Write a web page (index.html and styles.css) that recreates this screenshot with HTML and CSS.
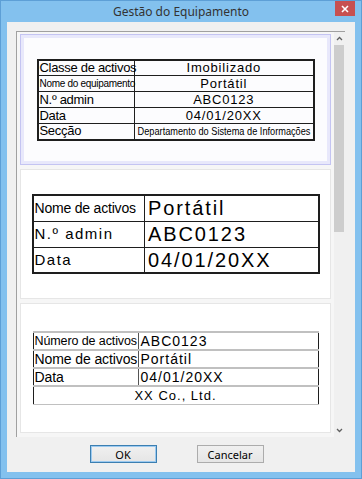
FILE: index.html
```html
<!DOCTYPE html>
<html lang="pt">
  <head>
    <meta charset="UTF-8" />
    <title>Gestão do Equipamento</title>
    <link rel="stylesheet" href="styles.css">
  </head>
  <body>
    <div class="window">
      <div class="titlebar">
        <span></span>
        <span class="title">Gestão do Equipamento</span>
        <span class="close">
          <svg width="8" height="8" viewBox="0 0 8 8"><path d="M1 1 L7 7 M7 1 L1 7" stroke="#fff" stroke-width="1.6" /></svg>
        </span>
      </div>
      <div class="client">
        <div class="panel">
          <div class="sheets">
            <div class="sheet sheet-selected">
              <div class="sheet-inner">
                <table class="label label-a">
                  <tr><td class="key">Classe de activos</td><td class="val">Imobilizado</td></tr>
                  <tr><td class="key key-small">Nome do equipamento</td><td class="val">Portátil</td></tr>
                  <tr><td class="key">N.º admin</td><td class="val">ABC0123</td></tr>
                  <tr><td class="key">Data</td><td class="val">04/01/20XX</td></tr>
                  <tr><td class="key">Secção</td><td class="val"><span class="narrow">Departamento do Sistema de Informações</span></td></tr>
                </table>
              </div>
            </div>
            <div class="sheet">
              <div class="sheet-inner">
                <table class="label label-b">
                  <tr><td class="key key-small">Nome de activos</td><td class="val">Portátil</td></tr>
                  <tr><td class="key">N.º admin</td><td class="val">ABC0123</td></tr>
                  <tr><td class="key">Data</td><td class="val">04/01/20XX</td></tr>
                </table>
              </div>
            </div>
            <div class="sheet">
              <div class="sheet-inner">
                <table class="label label-c">
                  <tr><td class="key key-small">Número de activos</td><td class="val">ABC0123</td></tr>
                  <tr><td class="key">Nome de activos</td><td class="val">Portátil</td></tr>
                  <tr><td class="key">Data</td><td class="val">04/01/20XX</td></tr>
                  <tr><td class="company" colspan="2">XX Co., Ltd.</td></tr>
                </table>
              </div>
            </div>
          </div>
          <div class="scrollbar">
            <div class="arrow">
              <svg width="7" height="5" viewBox="0 0 7 5"><path d="M1 4 L3.5 1.5 L6 4" fill="none" stroke="#606060" stroke-width="1.3" /></svg>
            </div>
            <div class="thumb"></div>
            <div class="track"></div>
            <div class="arrow">
              <svg width="7" height="5" viewBox="0 0 7 5"><path d="M1 1 L3.5 3.5 L6 1" fill="none" stroke="#606060" stroke-width="1.3" /></svg>
            </div>
          </div>
        </div>
        <div class="buttons">
          <button class="btn btn-default">OK</button>
          <button class="btn">Cancelar</button>
        </div>
      </div>
    </div>
  </body>
</html>
```

FILE: styles.css
```css
* {
  box-sizing: border-box;
  margin: 0;
  padding: 0;
}

body {
  font-family: "Noto Sans", "Open Sans", sans-serif;
  background-color: #83c1ee;
}

.window {
  width: 362px;
  height: 479px;
  background-color: #83c1ee;
  border: 1px solid #5d9fd6;
  display: flex;
  flex-direction: column;
}

.titlebar {
  height: 21px;
  display: grid;
  grid-template-columns: 1fr auto 1fr;
  align-items: start;
}

.title {
  font-size: 12px;
  line-height: 21px;
  color: #333333;
}

.close {
  justify-self: end;
  width: 20px;
  height: 15px;
  margin-right: 6px;
  background-color: #c75050;
  display: flex;
  justify-content: center;
  align-items: center;
}

.client {
  flex: 1;
  margin: 0 6px 6px 6px;
  background-color: #f0f0f0;
  padding: 9px 10px 0 9px;
  display: flex;
  flex-direction: column;
}

.panel {
  height: 406px;
  display: flex;
  background-color: #f6f6f6;
  border-top: 1px solid #a0a0a0;
  border-left: 1px solid #a0a0a0;
}

.sheets {
  flex: 1;
  overflow: hidden;
  padding: 2px 3px 0 3px;
  display: flex;
  flex-direction: column;
  gap: 4px;
}

.sheet {
  height: 130px;
  flex-shrink: 0;
  background-color: #ffffff;
  border: 1px solid #e6e6e6;
}

.sheet-selected {
  height: 131px;
  background-color: #e8e8fb;
  border-color: #c4c4f2;
  padding: 3px;
}

.sheet-inner {
  height: 100%;
  display: flex;
  justify-content: center;
  align-items: center;
}

.sheet-selected .sheet-inner {
  background-color: #fcfcfe;
}

/* labels */

.label {
  border-collapse: collapse;
  table-layout: fixed;
  font-family: "Liberation Sans", Arial, sans-serif;
  color: #000000;
}

.label td {
  border: 1px solid #1e1e1e;
  white-space: nowrap;
  overflow: visible;
  padding: 0 2px;
}

.label .val {
  text-align: center;
}

.label-a {
  width: 278px;
  border: 2px solid #1e1e1e;
}

.label-a td {
  height: 16px;
  font-size: 13px;
  line-height: 14px;
}

.label-a .key {
  width: 97px;
  letter-spacing: -0.3px;
  padding-left: 1px;
}

.label-a .key-small {
  font-size: 10px;
}

.label-a .val {
  letter-spacing: 0.8px;
  padding: 0;
}

.narrow {
  display: inline-block;
  font-size: 11.5px;
  letter-spacing: 0;
  transform: scaleX(0.8);
  transform-origin: center;
  margin: 0 -30px;
}

.label-b {
  width: 288px;
  border: 2px solid #1e1e1e;
}

.label-b td {
  height: 26px;
  font-size: 15px;
  line-height: 20px;
  letter-spacing: 1.5px;
  padding-left: 1px;
}

.label-b .key {
  width: 112px;
}

.label-b .key-small {
  font-size: 14px;
  letter-spacing: -0.2px;
}

.label-b .val {
  text-align: left;
  font-size: 20px;
  letter-spacing: 1.9px;
  padding-left: 3px;
}

.label-c {
  width: 286px;
  border: 1px solid #2a2a2a;
}

.label-c td {
  height: 18px;
  font-size: 14px;
  line-height: 15px;
  border-top: 2px solid #c0c0c0;
  border-bottom: 1px solid #c0c0c0;
}

.label-c .key {
  width: 105px;
  border-right: 1px solid #555555;
  padding-left: 1px;
  letter-spacing: -0.1px;
}

.label-c .key-small {
  font-size: 12.5px;
}

.label-c .val {
  text-align: left;
  letter-spacing: 1px;
  padding-left: 2px;
}

.label-c .company {
  text-align: center;
  font-size: 13px;
  letter-spacing: 1px;
}

/* scrollbar */

.scrollbar {
  width: 11px;
  display: flex;
  flex-direction: column;
  background-color: #f0f0f0;
}

.arrow {
  height: 13px;
  display: flex;
  justify-content: center;
  align-items: center;
}

.thumb {
  height: 187px;
  margin-right: 1px;
  background-color: #cdcdcd;
}

.track {
  flex: 1;
}

/* buttons */

.buttons {
  display: flex;
  justify-content: center;
  gap: 40px;
  padding: 8px 8px 0 0;
}

.btn {
  width: 67px;
  height: 18px;
  font-family: "Noto Sans", "Open Sans", sans-serif;
  font-size: 11px;
  color: #000000;
  background: linear-gradient(#f0f0f0, #e5e5e5);
  border: 1px solid #acacac;
}

.btn-default {
  border: 1px solid #3c7fb1;
  box-shadow: inset 0 0 0 1px #9ccaf0;
}
```
